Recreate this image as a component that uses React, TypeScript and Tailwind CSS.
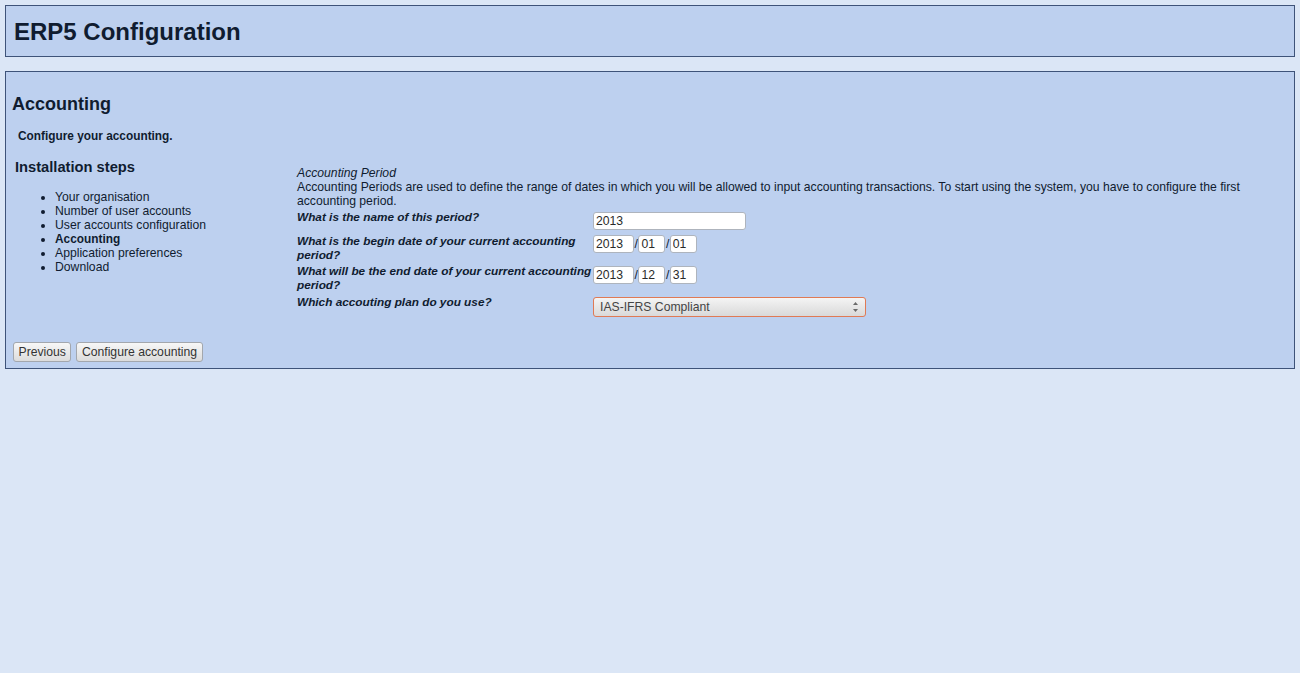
import type React from "react";

const STEPS = [
  "Your organisation",
  "Number of user accounts",
  "User accounts configuration",
  "Accounting",
  "Application preferences",
  "Download",
];

function TextBox({ value, className = "" }: { value: string; className?: string }) {
  return (
    <input
      type="text"
      defaultValue={value}
      className={`block h-[18px] rounded-[3px] border border-[#aeb4bd] bg-white px-[2px] text-[12.2px] leading-[16px] text-[#2a2a2a] outline-none ${className}`}
    />
  );
}

function DateField({ year, month, day }: { year: string; month: string; day: string }) {
  return (
    <div className="mt-[2px] flex items-center text-[12.2px] leading-[14px]">
      <TextBox value={year} className="w-[41px]" />
      <span className="mx-[0.5px]">/</span>
      <TextBox value={month} className="w-[27px]" />
      <span className="mx-[0.5px]">/</span>
      <TextBox value={day} className="w-[27px]" />
    </div>
  );
}

function FormRow({
  label,
  className = "",
  children,
}: {
  label: React.ReactNode;
  className?: string;
  children: React.ReactNode;
}) {
  return (
    <div className={`flex items-start ${className}`}>
      <div className="w-[296px] shrink-0 text-[11.8px] leading-[14px] font-bold italic">{label}</div>
      {children}
    </div>
  );
}

function Button({ children }: { children: React.ReactNode }) {
  return (
    <button className="h-[20px] rounded-[3px] border border-[#a3a7ad] bg-gradient-to-b from-[#f7f7f7] to-[#dcdcdc] px-[4.5px] text-[12.2px] leading-[16px] text-[#333]">
      {children}
    </button>
  );
}

export default function App() {
  return (
    <div
      className="min-h-screen bg-[#dbe6f6] p-[5px] text-[#101c30]"
      style={{ fontFamily: '"Liberation Sans", Arial, sans-serif' }}
    >
      {/* header */}
      <div className="h-[52px] border border-[#3e5379] bg-[#bdd0ef] pl-[8px] pt-[12px]">
        <h1 className="text-[24px] leading-[normal] font-bold">ERP5 Configuration</h1>
      </div>

      {/* main panel */}
      <div className="mt-[14px] h-[298px] border border-[#3e5379] bg-[#bdd0ef] px-[6px] pt-[22px]">
        <h2 className="text-[18px] leading-[normal] font-bold">Accounting</h2>
        <p className="ml-[6px] mt-[14px] text-[11.85px] leading-[normal] font-bold">
          Configure your accounting.
        </p>

        <div className="mt-[15px] flex items-start">
          {/* steps */}
          <div className="mt-[1px] w-[285px] shrink-0">
            <h3 className="ml-[3px] text-[14.7px] leading-[normal] font-bold">Installation steps</h3>
            <ul className="mt-[15px] list-disc pl-[43px] text-[12.2px] leading-[14px]">
              {STEPS.map((s) => (
                <li key={s} className={s === "Accounting" ? "text-[11.85px] font-bold" : ""}>
                  {s}
                </li>
              ))}
            </ul>
          </div>

          {/* form */}
          <div className="mt-[8px] flex-1">
            <div className="text-[12.2px] leading-[14px] italic">Accounting Period</div>
            <p className="text-[12.2px] leading-[14px]">
              Accounting Periods are used to define the range of dates in which you will be allowed to input
              accounting transactions. To start using the system, you have to configure the first accounting
              period.
            </p>

            <FormRow className="mt-[2px]" label="What is the name of this period?">
              <div className="mt-[2px]">
                <TextBox value="2013" className="w-[153px]" />
              </div>
            </FormRow>
            <FormRow className="mt-[4px]" label="What is the begin date of your current accounting period?">
              <div className="-mt-[1px]">
                <DateField year="2013" month="01" day="01" />
              </div>
            </FormRow>
            <FormRow className="mt-[2px]" label="What will be the end date of your current accounting period?">
              <DateField year="2013" month="12" day="31" />
            </FormRow>
            <FormRow className="mt-[3px]" label="Which accouting plan do you use?">
              <div className="relative mt-[2px] w-[273px]">
                <select
                  defaultValue="ias"
                  className="block h-[20px] w-full appearance-none rounded-[3px] border border-[#e07a55] bg-gradient-to-b from-[#f4f4f4] to-[#d9d9d9] pl-[6px] text-[12.2px] leading-[16px] text-[#444] outline-none"
                >
                  <option value="ias">IAS-IFRS Compliant</option>
                </select>
                <svg
                  className="pointer-events-none absolute right-[7px] top-[4px]"
                  width="7"
                  height="12"
                  viewBox="0 0 7 12"
                  aria-hidden
                >
                  <path d="M3.5 1 L6 4 H1 Z" fill="#6a6a6a" />
                  <path d="M3.5 11 L6 8 H1 Z" fill="#6a6a6a" />
                </svg>
              </div>
            </FormRow>
          </div>
        </div>

        <div className="ml-[1px] mt-[25px] flex gap-[5px]">
          <Button>Previous</Button>
          <Button>Configure accounting</Button>
        </div>
      </div>
    </div>
  );
}
